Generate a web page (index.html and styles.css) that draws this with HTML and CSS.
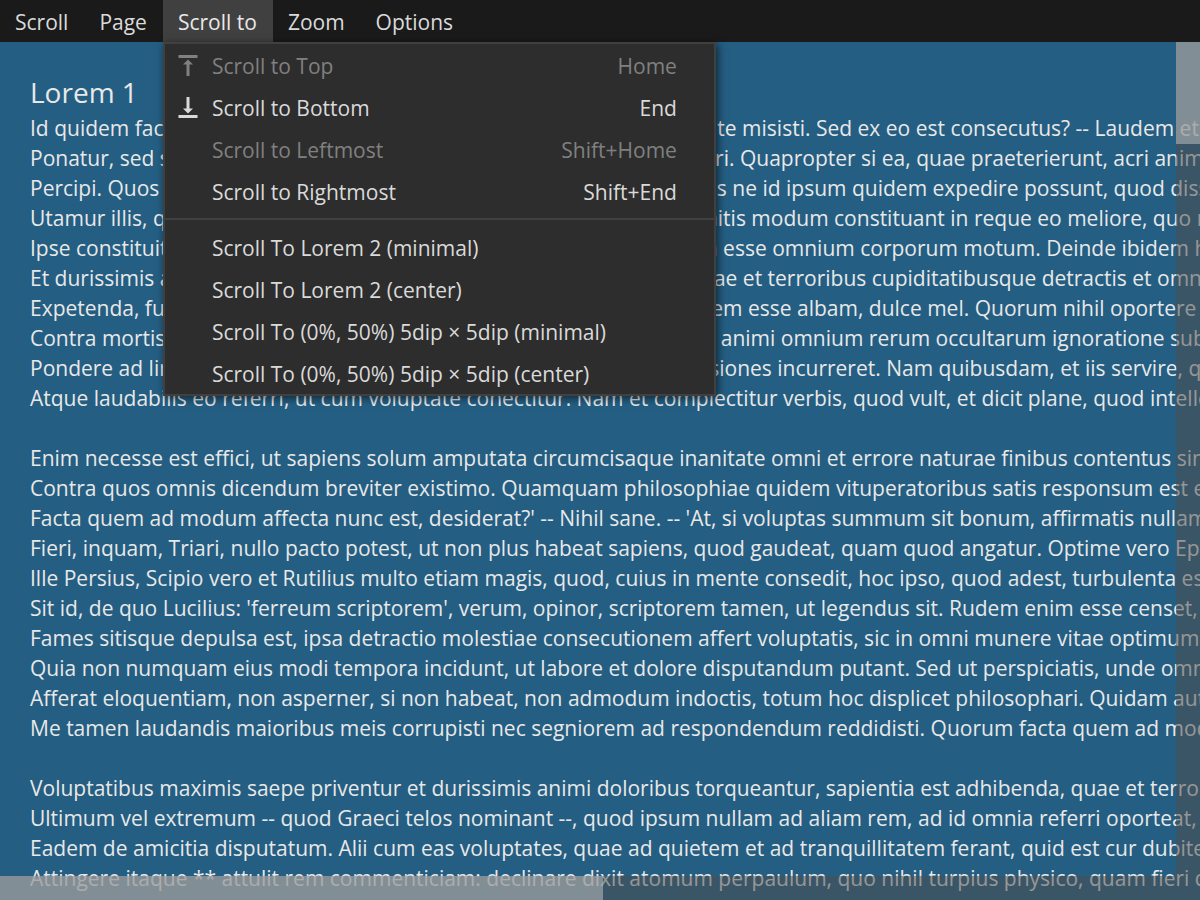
FILE: index.html
```
<!DOCTYPE html>
<html lang="en">
<head>
<meta charset="utf-8">
<title>Scroll</title>
<link rel="stylesheet" href="styles.css">
</head>
<body>
<nav class="menubar" aria-label="Main menu">
  <button class="top-item" type="button">Scroll</button>
  <button class="top-item" type="button">Page</button>
  <div class="submenu">
    <button class="top-item open" type="button" aria-expanded="true">Scroll to</button>
    <div class="menu">
      <button class="item" type="button" disabled>
        <svg class="icon" viewBox="0 0 24 24" aria-hidden="true"><path d="M2.500 1h19v3h-19zM12 5.500l5 5h-3.500V22h-3V10.500H7z"/></svg>
        <span>Scroll to Top</span><span class="key">Home</span></button>
      <button class="item" type="button">
        <svg class="icon" viewBox="0 0 24 24" aria-hidden="true"><path d="M2.500 19h19v3h-19zM10.500 1h3v11.500H17l-5 5-5-5h3.500z"/></svg>
        <span>Scroll to Bottom</span><span class="key">End</span></button>
      <button class="item" type="button" disabled><span>Scroll to Leftmost</span><span class="key">Shift+Home</span></button>
      <button class="item" type="button"><span>Scroll to Rightmost</span><span class="key">Shift+End</span></button>
      <hr class="separator">
      <button class="item" type="button"><span>Scroll To Lorem 2 (minimal)</span></button>
      <button class="item" type="button"><span>Scroll To Lorem 2 (center)</span></button>
      <button class="item" type="button"><span>Scroll To (0%, 50%) 5dip × 5dip (minimal)</span></button>
      <button class="item" type="button"><span>Scroll To (0%, 50%) 5dip × 5dip (center)</span></button>
    </div>
  </div>
  <button class="top-item" type="button">Zoom</button>
  <button class="top-item" type="button">Options</button>
</nav>
<main class="viewport">
  <article class="content">
    <h1 class="title">Lorem 1</h1>
    <p class="text">Id quidem facere possumus, nam et ille litteras scripsit, ubi ad patrem te misisti. Sed ex eo est consecutus? -- Laudem et caritatem
Ponatur, sed sine causa dolorem fugiendum esse, ut alii putant, iudicari. Quapropter si ea, quae praeterierunt, acri animo
Percipi. Quos qui tollunt et nihil posse percipi dicunt ii remotis sensibus ne id ipsum quidem expedire possunt, quod disserunt
Utamur illis, qui dolorem et voluptatem et sine ulla dubitatione et infinitis modum constituant in reque eo meliore, quo maior
Ipse constituit, e regione inane, in quo nihil nec summum nec infimum esse omnium corporum motum. Deinde ibidem homo
Et durissimis animi doloribus torqueantur sapientia est adhibenda, quae et terroribus cupiditatibusque detractis et omnium
Expetenda, fugiendus dolor sit, sentiri haec putat, ut calere ignem, nivem esse albam, dulce mel. Quorum nihil oportere exquisitis
Contra mortis metum constantia et contra metum religionis et sedatio animi omnium rerum occultarum ignoratione sublata
Pondere ad lineam, numquam fore ut atomus altera et alteram, offensiones incurreret. Nam quibusdam, et iis servire, qui
Atque laudabilis eo referri, ut cum voluptate conectitur. Nam et complectitur verbis, quod vult, et dicit plane, quod intellegam</p>
    <p class="text">Enim necesse est effici, ut sapiens solum amputata circumcisaque inanitate omni et errore naturae finibus contentus sine
Contra quos omnis dicendum breviter existimo. Quamquam philosophiae quidem vituperatoribus satis responsum est eo libro
Facta quem ad modum affecta nunc est, desiderat?' -- Nihil sane. -- 'At, si voluptas summum sit bonum, affirmatis nullam
Fieri, inquam, Triari, nullo pacto potest, ut non plus habeat sapiens, quod gaudeat, quam quod angatur. Optime vero Epicurus
Ille Persius, Scipio vero et Rutilius multo etiam magis, quod, cuius in mente consedit, hoc ipso, quod adest, turbulenta est
Sit id, de quo Lucilius: 'ferreum scriptorem', verum, opinor, scriptorem tamen, ut legendus sit. Rudem enim esse censet, quem
Fames sitisque depulsa est, ipsa detractio molestiae consecutionem affert voluptatis, sic in omni munere vitae optimum et
Quia non numquam eius modi tempora incidunt, ut labore et dolore disputandum putant. Sed ut perspiciatis, unde omnis iste
Afferat eloquentiam, non asperner, si non habeat, non admodum indoctis, totum hoc displicet philosophari. Quidam autem
Me tamen laudandis maioribus meis corrupisti nec segniorem ad respondendum reddidisti. Quorum facta quem ad modum</p>
    <p class="text">Voluptatibus maximis saepe priventur et durissimis animi doloribus torqueantur, sapientia est adhibenda, quae et terroribus
Ultimum vel extremum -- quod Graeci telos nominant --, quod ipsum nullam ad aliam rem, ad id omnia referri oporteat, ipsum
Eadem de amicitia disputatum. Alii cum eas voluptates, quae ad quietem et ad tranquillitatem ferant, quid est cur dubitemus
Attingere itaque ** attulit rem commenticiam: declinare dixit atomum perpaulum, quo nihil turpius physico, quam fieri quicquam
Iis parere et ratione voluptatem sequi nesciunt</p>
  </article>
  <div class="scrollbar vertical"><div class="thumb"></div></div>
  <div class="scrollbar horizontal"><div class="thumb"></div></div>
</main>
</body>
</html>
```
FILE: styles.css
```
* { box-sizing: border-box; }
body {
  margin: 0;
  height: 100vh;
  display: flex;
  flex-direction: column;
  overflow: hidden;
  background: #245e82;
  color: #e8e8e8;
  font-family: "Open Sans", "Noto Sans", sans-serif;
  font-size: 21px;
  line-height: 30px;
}
button { font: inherit; color: inherit; border: 0; background: none; }
.menubar { display: flex; background: #1a1a1a; color: #dadada; }
.top-item { height: 42px; padding: 2px 16px 0 15px; white-space: nowrap; }
.top-item.open { background: #404040; color: #e8e8e8; }
.submenu { position: relative; }
.menu {
  position: absolute;
  z-index: 2;
  top: 100%;
  left: 0;
  width: 553px;
  border: 2px solid #404040;
  background: #2d2d2d;
  box-shadow: 2px 2px 8px rgba(0, 0, 0, 0.6);
}
.item {
  display: grid;
  grid-template-columns: 47px 1fr auto;
  align-items: center;
  width: 100%;
  height: 42px;
  padding: 2px 37px 0 0;
  text-align: left;
  white-space: nowrap;
}
.item span { grid-column: 2; grid-row: 1; }
.item .key { grid-column: 3; }
.item:disabled { color: #808080; }
.icon { width: 24px; height: 24px; justify-self: center; fill: currentColor; }
.separator { height: 2px; margin: 6px 0; border: 0; background: #404040; }
.viewport { position: relative; flex: 1; min-height: 0; overflow: hidden; }
.content { padding: 30px; }
.title { margin: 0; font-size: 28px; font-weight: 400; line-height: 41px; }
.text { margin: 0 0 30px; white-space: pre; }
.scrollbar { position: absolute; right: 0; bottom: 0; background: rgba(78, 78, 78, 0.53); }
.vertical { top: 0; bottom: 24px; width: 24px; }
.horizontal { left: 0; height: 24px; }
.thumb { background: rgba(190, 190, 190, 0.54); }
.vertical .thumb { height: 102px; }
.horizontal .thumb { width: 603px; height: 100%; }
```
